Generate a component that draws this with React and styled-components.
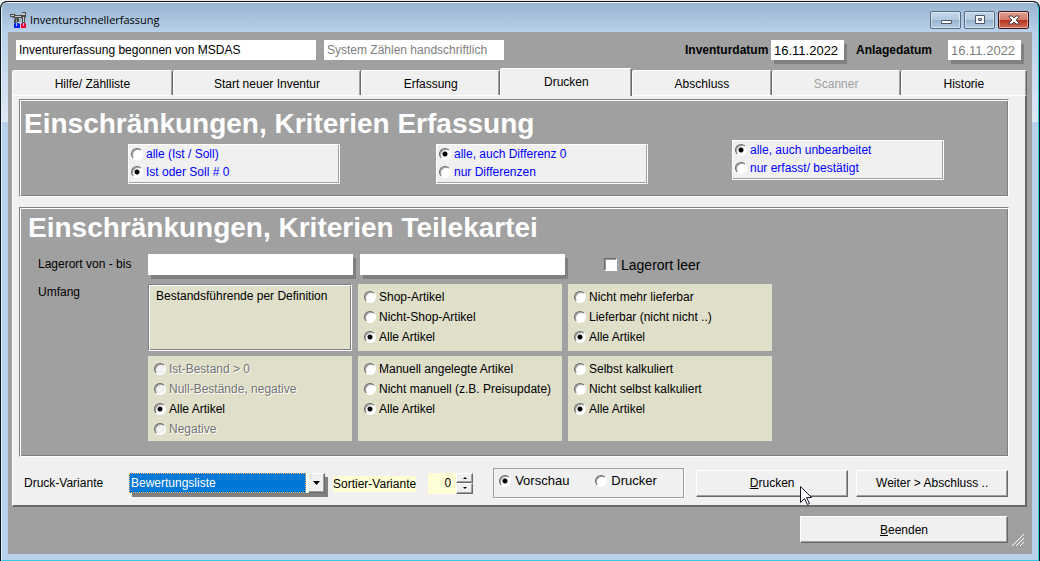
import React from "react";
import styled, { createGlobalStyle, css } from "styled-components";

const GlobalStyle = createGlobalStyle`
  *, *::before, *::after { box-sizing: border-box; }
  body {
    margin: 0;
    background: #e9edf0;
    font-family: "Liberation Sans", Arial, sans-serif;
    font-size: 12px;
    line-height: 16px;
    color: #000;
  }
  input, select, button { font: inherit; color: inherit; margin: 0; }
  h2, fieldset, legend, p { margin: 0; padding: 0; border: 0; min-width: 0; }
`;

const raised = css`
  border: 1px solid;
  border-color: #fff #696969 #696969 #fff;
  box-shadow: inset -1px -1px #a0a0a0;
`;

const etched = css`
  border: 1px solid;
  border-color: #808080 #fff #fff #808080;
  box-shadow: inset 1px 1px #fff, inset -1px -1px #808080;
`;

const Desktop = styled.div`
  padding-top: 1px;
`;

const WindowEdge = styled.div`
  border: 1px solid #101418;
  border-bottom: 0;
  border-radius: 7px 7px 0 0;
  overflow: hidden;
  background: #101418;
`;

const WindowFrame = styled.div`
  display: flex;
  flex-direction: column;
  min-height: calc(100vh - 2px);
  padding: 0 6px 6px;
  border: 1px solid;
  border-color: #f4f8fc #35c9e4 #35c9e4 #dff3fb;
  border-radius: 6px 6px 0 0;
  background: linear-gradient(#99b4d1 0, #b9d1ea 29px, #dfe9f5 119px, #b9d1ea 119px);
`;

const TitleBar = styled.header`
  display: flex;
  align-items: center;
  height: 29px;
  padding: 5px 3px 0 1px;
`;

const Title = styled.h1`
  flex: 1;
  margin: 0 0 0 3px;
  font: 11px/16px "Open Sans", "Noto Sans", sans-serif;
`;

const CaptionButtons = styled.div`
  display: flex;
  gap: 3px;
`;

const CaptionButton = styled.button`
  display: flex;
  align-items: center;
  justify-content: center;
  width: 31px;
  height: 18px;
  padding: 0;
  border: 1px solid ${(p) => (p.$close ? "#43141a" : "#566b84")};
  border-radius: 2px;
  box-shadow: inset 0 0 0 1px rgba(255, 255, 255, 0.45);
  background: ${(p) =>
    p.$close
      ? "linear-gradient(#e3a193 0, #d2796a 48%, #b5321c 52%, #d0705a)"
      : "linear-gradient(#c3d5e8 0, #b4cae1 48%, #98b3d0 52%, #b6cde5)"};
`;

const Body = styled.main`
  flex: 1;
  padding: 8px 5px 10px 4px;
  background: #a0a0a0;
`;

const StatusRow = styled.div`
  display: flex;
  align-items: center;
  padding: 0 6px 8px 4px;
`;

const Field = styled.input`
  width: ${(p) => p.$width}px;
  height: ${(p) => (p.$tall ? 21 : 20)}px;
  padding: 0 3px;
  border: 0;
  border-radius: 0;
  background: #fff;
  color: ${(p) => (p.$muted ? "#808080" : "#000")};
  font-size: ${(p) => (p.$date ? 13 : 12)}px;
  font-weight: normal;
  box-shadow: ${(p) => (p.$shadow ? "3px 4px #808080" : "none")};
`;

const StatusFields = styled.div`
  display: flex;
  flex: 1;
  gap: 8px;
`;

const DateLabel = styled.label`
  display: flex;
  align-items: center;
  justify-content: space-between;
  width: ${(p) => p.$width}px;
  margin-left: 12px;
  font-weight: bold;
`;

const TabList = styled.div`
  display: flex;
  align-items: flex-end;
`;

const Tab = styled.button`
  position: relative;
  flex: ${(p) => p.$grow} 1 0;
  padding: ${(p) => (p.$active ? "5px 0 6px" : "5px 0 3px")};
  border: 1px solid;
  border-color: #fff #696969 transparent #fff;
  border-bottom-width: 0;
  border-radius: 2px 2px 0 0;
  margin-bottom: ${(p) => (p.$active ? -1 : 0)}px;
  z-index: ${(p) => (p.$active ? 1 : 0)};
  box-shadow: inset -1px 0 #a0a0a0;
  background: #f0f0f0;
  color: #000;

  &:disabled { color: #a0a0a0; }
`;

const TabPage = styled.section`
  padding: 3px 16px 7px 6px;
  border: solid;
  border-width: 1px 2px 2px 1px;
  border-color: #fff #696969 #696969 #fff;
  background: #f0f0f0;
`;

const Panel = styled.section`
  ${etched}
  margin-bottom: ${(p) => p.$gap}px;
  padding: ${(p) => p.$pad};
  background: #a0a0a0;
`;

const Heading = styled.h2`
  font-size: 28px;
  line-height: 32px;
  color: #fff;
`;

const CriteriaRow = styled.div`
  display: flex;
  align-items: flex-end;
  padding: 0 0 0 104px;
`;

const CriteriaBox = styled.fieldset`
  ${etched}
  border-color: #fff;
  box-shadow: inset -1px -1px #a0a0a0;
  flex: none;
  width: 212px;
  margin: ${(p) => (p.$raised ? "0 0 4px 84px" : "0 96px 0 0")};
  padding: 0 2px 2px;
  background: #f0f0f0;
  color: #00f;

  & + & { margin-right: 0; }
`;

const Option = styled.label`
  display: flex;
  align-items: center;
  gap: ${(p) => p.$gap || 3}px;
  height: ${(p) => p.$height || 20}px;
  font-size: ${(p) => p.$size || 12}px;
  white-space: nowrap;
  color: ${(p) => (p.$disabled ? "#747474" : "inherit")};
  text-shadow: ${(p) => (p.$disabled ? "1px 1px #fff" : "none")};
`;

const RadioInput = styled.input`
  appearance: none;
  flex: none;
  width: 12px;
  height: 12px;
  border: 1px solid;
  border-color: #696969 #fff #fff #696969;
  border-radius: 50%;
  box-shadow: inset 1px 1px #a0a0a0;
  background: #fff;

  &:checked {
    background: radial-gradient(circle at 50% 50%, #000 0 2px, #fff 3px);
  }
  &:disabled { background: #f0f0f0; }
`;

const CheckInput = styled.input`
  appearance: none;
  flex: none;
  width: 13px;
  height: 13px;
  border: 1px solid;
  border-color: #696969 #fff #fff #696969;
  border-radius: 0;
  box-shadow: inset 1px 1px #a0a0a0;
  background: #fff;
`;

const FilterForm = styled.div`
  display: grid;
  grid-template-columns: 110px 1fr;
  row-gap: 9px;
  padding: 10px 0 0 10px;
`;

const FieldRow = styled.div`
  display: flex;
  align-items: center;
  gap: 7px;

  & > label { margin-left: 32px; }
`;

const FormLabel = styled.label`
  padding-top: ${(p) => p.$top || 0}px;
`;

const FilterGrid = styled.div`
  display: grid;
  grid-template-columns: repeat(3, 204px);
  grid-template-rows: minmax(67px, auto) auto;
  gap: 5px 6px;
`;

const FilterBox = styled.fieldset`
  padding: 3px 6px 2px;
  background: #dfdfca;
`;

const NoteBox = styled.div`
  ${etched}
  padding: 3px 7px;
  background: #dfdfca;
`;

const PrintBar = styled.div`
  display: flex;
  align-items: center;
  padding-left: 5px;
`;

const Caption = styled.label`
  width: 105px;
`;

const SelectWrap = styled.div`
  display: flex;
  position: relative;
  width: 196px;
  box-shadow: 3px 4px #808080;
  background: #fff;
`;

const Select = styled.select`
  appearance: none;
  width: 177px;
  height: 20px;
  padding: 0 1px;
  border: 1px dotted #ffb060;
  border-radius: 0;
  background: #0078d7;
  color: #fff;
`;

const DropMark = styled.span`
  ${raised}
  display: flex;
  align-items: center;
  justify-content: center;
  width: 17px;
  margin-left: 2px;
  background: #f0f0f0;
  pointer-events: none;
`;

const SortLabel = styled.label`
  margin: 2px 12px 0 8px;
  background: #ffffd7;
`;

const NumberInput = styled.input`
  width: 28px;
  height: 21px;
  padding: 0 5px 0 0;
  border: 0;
  text-align: right;
  background: #ffffd7;
`;

const Spinner = styled.div`
  display: grid;
  width: 17px;
  height: 21px;
`;

const SpinButton = styled.button`
  ${raised}
  display: flex;
  align-items: center;
  justify-content: center;
  padding: 0;
  background: #f0f0f0;
`;

const TargetBox = styled.fieldset`
  display: flex;
  gap: 26px;
  width: 191px;
  margin: 0 12px 0 20px;
  padding: 0 5px 4px;
  border: 1px solid #a0a0a0;
  box-shadow: 1px 1px #fff;
`;

const PushButton = styled.button`
  ${raised}
  position: relative;
  width: ${(p) => p.$width}px;
  height: 27px;
  padding: 0;
  background: #f0f0f0;

  & + & { margin-left: 8px; }
`;

const Pointer = styled.svg`
  position: absolute;
  left: 102px;
  top: 14px;
  z-index: 2;
`;

const Footer = styled.footer`
  display: flex;
  align-items: flex-end;
  justify-content: flex-end;
  gap: 4px;
  padding: 9px 2px 0 0;
`;

const Grip = styled.svg`
  margin-bottom: -4px;
`;

function Radios({ name, options, checked, disabled = [], ...look }) {
  return options.map((text, i) => (
    <Option key={text} $disabled={disabled.includes(i)} {...look}>
      <RadioInput
        type="radio"
        name={name}
        defaultChecked={i === checked}
        disabled={disabled.includes(i)}
      />
      {text}
    </Option>
  ));
}

const AppIcon = () => (
  <svg width="18" height="18" viewBox="0 0 18 18" aria-hidden="true">
    <path d="M1 3h5l1 1h5l1-1V1h4v5l-1 1v5h-3V8l-1-1h-2v4H8l-1 1H5V9l1-2H4L3 6H1z" fill="#4e4e4e" />
    <path d="M2 4h3v1H2zM6 5h6v1H6zM13 2h3v2h-3zM14 6h1v5h-1z" fill="#c8c8c8" />
    <path d="M7 8h1v3H7zM11 8h1v2h-1z" fill="#8c8c8c" />
    <path d="M5 13l1-1h3l2 1v4H5z" fill="#0020e8" />
    <path d="M12 13l1-1h3l1 1v4h-5z" fill="#f0002c" />
    <path d="M7 12h1v3H7zM14 12h1v3h-1z" fill="#9cc8ff" />
  </svg>
);

const tabs = [
  { text: "Hilfe/ Zählliste", grow: 161 },
  { text: "Start neuer Inventur", grow: 189 },
  { text: "Erfassung", grow: 139 },
  { text: "Drucken", grow: 132, active: true },
  { text: "Abschluss", grow: 139 },
  { text: "Scanner", grow: 129, disabled: true },
  { text: "Historie", grow: 126 },
];

export default function App() {
  return (
    <Desktop>
      <GlobalStyle />
      <WindowEdge>
        <WindowFrame>
          <TitleBar>
            <AppIcon />
            <Title>Inventurschnellerfassung</Title>
            <CaptionButtons>
              <CaptionButton aria-label="Minimieren">
                <svg width="12" height="12" viewBox="0 0 12 12">
                  <path d="M1.500 6.500h10v3h-10z" fill="#fff" stroke="#4b5666" />
                </svg>
              </CaptionButton>
              <CaptionButton aria-label="Maximieren">
                <svg width="12" height="12" viewBox="0 0 12 12">
                  <path d="M1.500 1.500h9v8h-9zM4.500 4.500v2h3v-2z" fill="#fff" stroke="#4b5666" fillRule="evenodd" />
                </svg>
              </CaptionButton>
              <CaptionButton $close aria-label="Schließen">
                <svg width="14" height="12" viewBox="0 0 14 12">
                  <path
                    d="M2 2h3l2 2 2-2h3v1L9 6l3 3v1H9L7 8l-2 2H2V9l3-3-3-3z"
                    fill="#fff"
                    stroke="#54414a"
                  />
                </svg>
              </CaptionButton>
            </CaptionButtons>
          </TitleBar>

          <Body>
            <StatusRow>
              <StatusFields>
                <Field $width={300} readOnly aria-label="Status" value="Inventurerfassung begonnen von MSDAS" />
                <Field $width={180} $muted readOnly aria-label="System" value="System Zählen handschriftlich" />
              </StatusFields>
              <DateLabel $width={159}>
                Inventurdatum
                <Field $width={73} $date $shadow defaultValue="16.11.2022" />
              </DateLabel>
              <DateLabel $width={165}>
                Anlagedatum
                <Field $width={73} $date $shadow $muted readOnly value="16.11.2022" />
              </DateLabel>
            </StatusRow>

            <TabList role="tablist">
              {tabs.map((t) => (
                <Tab
                  key={t.text}
                  role="tab"
                  aria-selected={!!t.active}
                  $grow={t.grow}
                  $active={t.active}
                  disabled={t.disabled}
                >
                  {t.text}
                </Tab>
              ))}
            </TabList>

            <TabPage role="tabpanel">
              <Panel $gap={10} $pad="8px 4px 12px">
                <Heading>Einschränkungen, Kriterien Erfassung</Heading>
                <CriteriaRow>
                  <CriteriaBox aria-label="Ist / Soll">
                    <Radios name="istsoll" options={["alle (Ist / Soll)", "Ist oder Soll # 0"]} checked={1} $height={18} />
                  </CriteriaBox>
                  <CriteriaBox aria-label="Differenz">
                    <Radios name="differenz" options={["alle, auch Differenz 0", "nur Differenzen"]} checked={0} $height={18} />
                  </CriteriaBox>
                  <CriteriaBox $raised aria-label="Bearbeitung">
                    <Radios name="bearbeitung" options={["alle, auch unbearbeitet", "nur erfasst/ bestätigt"]} checked={0} $height={18} />
                  </CriteriaBox>
                </CriteriaRow>
              </Panel>

              <Panel $gap={11} $pad="4px 8px 15px">
                <Heading>Einschränkungen, Kriterien Teilekartei</Heading>
                <FilterForm>
                  <FormLabel htmlFor="lager-von" $top={2}>Lagerort von - bis</FormLabel>
                  <FieldRow>
                    <Field id="lager-von" $width={205} $tall $shadow />
                    <Field $width={205} $tall $shadow aria-label="Lagerort bis" />
                    <Option $size={14} $gap={4}>
                      <CheckInput type="checkbox" />
                      Lagerort leer
                    </Option>
                  </FieldRow>
                  <FormLabel as="span">Umfang</FormLabel>
                  <FilterGrid>
                    <NoteBox>Bestandsführende per Definition</NoteBox>
                    <FilterBox aria-label="Shop">
                      <Radios name="shop" options={["Shop-Artikel", "Nicht-Shop-Artikel", "Alle Artikel"]} checked={2} />
                    </FilterBox>
                    <FilterBox aria-label="Lieferbarkeit">
                      <Radios name="liefer" options={["Nicht mehr lieferbar", "Lieferbar (nicht nicht ..)", "Alle Artikel"]} checked={2} />
                    </FilterBox>
                    <FilterBox aria-label="Bestand">
                      <Radios
                        name="bestand"
                        options={["Ist-Bestand > 0", "Null-Bestände, negative", "Alle Artikel", "Negative"]}
                        checked={2}
                        disabled={[0, 1, 3]}
                      />
                    </FilterBox>
                    <FilterBox aria-label="Anlage">
                      <Radios
                        name="anlage"
                        options={["Manuell angelegte Artikel", "Nicht manuell (z.B. Preisupdate)", "Alle Artikel"]}
                        checked={2}
                      />
                    </FilterBox>
                    <FilterBox aria-label="Kalkulation">
                      <Radios name="kalk" options={["Selbst kalkuliert", "Nicht selbst kalkuliert", "Alle Artikel"]} checked={2} />
                    </FilterBox>
                  </FilterGrid>
                </FilterForm>
              </Panel>

              <PrintBar>
                <Caption htmlFor="variante">Druck-Variante</Caption>
                <SelectWrap>
                  <Select id="variante" defaultValue="b">
                    <option value="b">Bewertungsliste</option>
                  </Select>
                  <DropMark>
                    <svg width="7" height="4" viewBox="0 0 7 4"><path d="M0 0h7L3.500 4z" /></svg>
                  </DropMark>
                </SelectWrap>
                <SortLabel htmlFor="sortier">Sortier-Variante</SortLabel>
                <NumberInput id="sortier" type="text" inputMode="numeric" defaultValue="0" />
                <Spinner>
                  <SpinButton aria-label="Erhöhen">
                    <svg width="4" height="2" viewBox="0 0 4 2"><path d="M0 2h4L2 0z" /></svg>
                  </SpinButton>
                  <SpinButton aria-label="Verringern">
                    <svg width="4" height="2" viewBox="0 0 4 2"><path d="M0 0h4L2 2z" /></svg>
                  </SpinButton>
                </Spinner>
                <TargetBox aria-label="Ausgabe">
                  <Radios name="ausgabe" options={["Vorschau", "Drucker"]} checked={0} $size={13} $gap={4} $height={24} />
                </TargetBox>
                <PushButton $width={152}>
                  <u>D</u>rucken
                  <Pointer width="14" height="21" viewBox="0 0 14 21" aria-hidden="true">
                    <path d="M1.500 1.500v16l4-4 3 6 2-1-3-6h5z" fill="#fff" stroke="#1a1a2a" />
                  </Pointer>
                </PushButton>
                <PushButton $width={152}>Weiter &gt; Abschluss ..</PushButton>
              </PrintBar>
            </TabPage>

            <Footer>
              <PushButton $width={208}><u>B</u>eenden</PushButton>
              <Grip width="13" height="13" viewBox="0 0 13 13" aria-hidden="true">
                <path d="M0 12L12 0M4 12l8-8M8 12l4-4" stroke="#fff" fill="none" />
              </Grip>
            </Footer>
          </Body>
        </WindowFrame>
      </WindowEdge>
    </Desktop>
  );
}
